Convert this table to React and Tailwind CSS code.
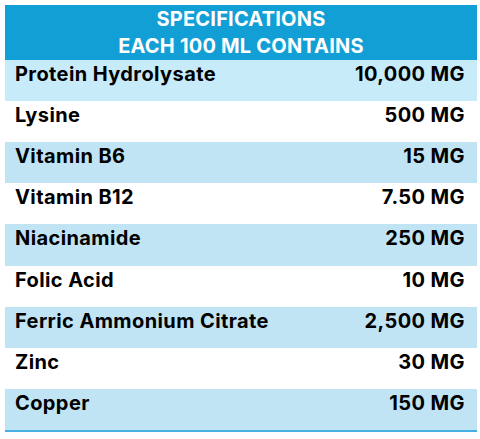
const rows = [
  { name: "Protein Hydrolysate", amount: "10,000 MG", bg: "bg-[#c8ebfa]" },
  { name: "Lysine", amount: "500 MG", bg: "bg-white" },
  { name: "Vitamin B6", amount: "15 MG", bg: "bg-[#c0e4f4]" },
  { name: "Vitamin B12", amount: "7.50 MG", bg: "bg-white" },
  { name: "Niacinamide", amount: "250 MG", bg: "bg-[#c0e4f4]" },
  { name: "Folic Acid", amount: "10 MG", bg: "bg-white" },
  { name: "Ferric Ammonium Citrate", amount: "2,500 MG", bg: "bg-[#c0e4f4]" },
  { name: "Zinc", amount: "30 MG", bg: "bg-white" },
  { name: "Copper", amount: "150 MG", bg: "bg-[#c0e4f4]" },
];

export default function App() {
  return (
    <div className="w-[480px] h-[439px] bg-white pt-[5px] pl-[5px] font-['Inter',sans-serif]">
      <div className="w-[472px]">
        <div className="h-[55px] bg-[#129fd6] text-white font-bold text-[20px] leading-[27px] tracking-[0.2px] text-center pt-[1px]">
          <div>SPECIFICATIONS</div>
          <div>EACH 100 ML CONTAINS</div>
        </div>
        {rows.map((row) => (
          <div
            key={row.name}
            className={`h-[41.11px] flex justify-between pl-[10px] pr-[12px] pt-[2px] text-[20px] leading-[25px] tracking-[0.4px] font-bold text-black ${row.bg}`}
          >
            <span>{row.name}</span>
            <span>{row.amount}</span>
          </div>
        ))}
        <div className="h-[2px] bg-[#45b1e2]" />
      </div>
    </div>
  );
}
